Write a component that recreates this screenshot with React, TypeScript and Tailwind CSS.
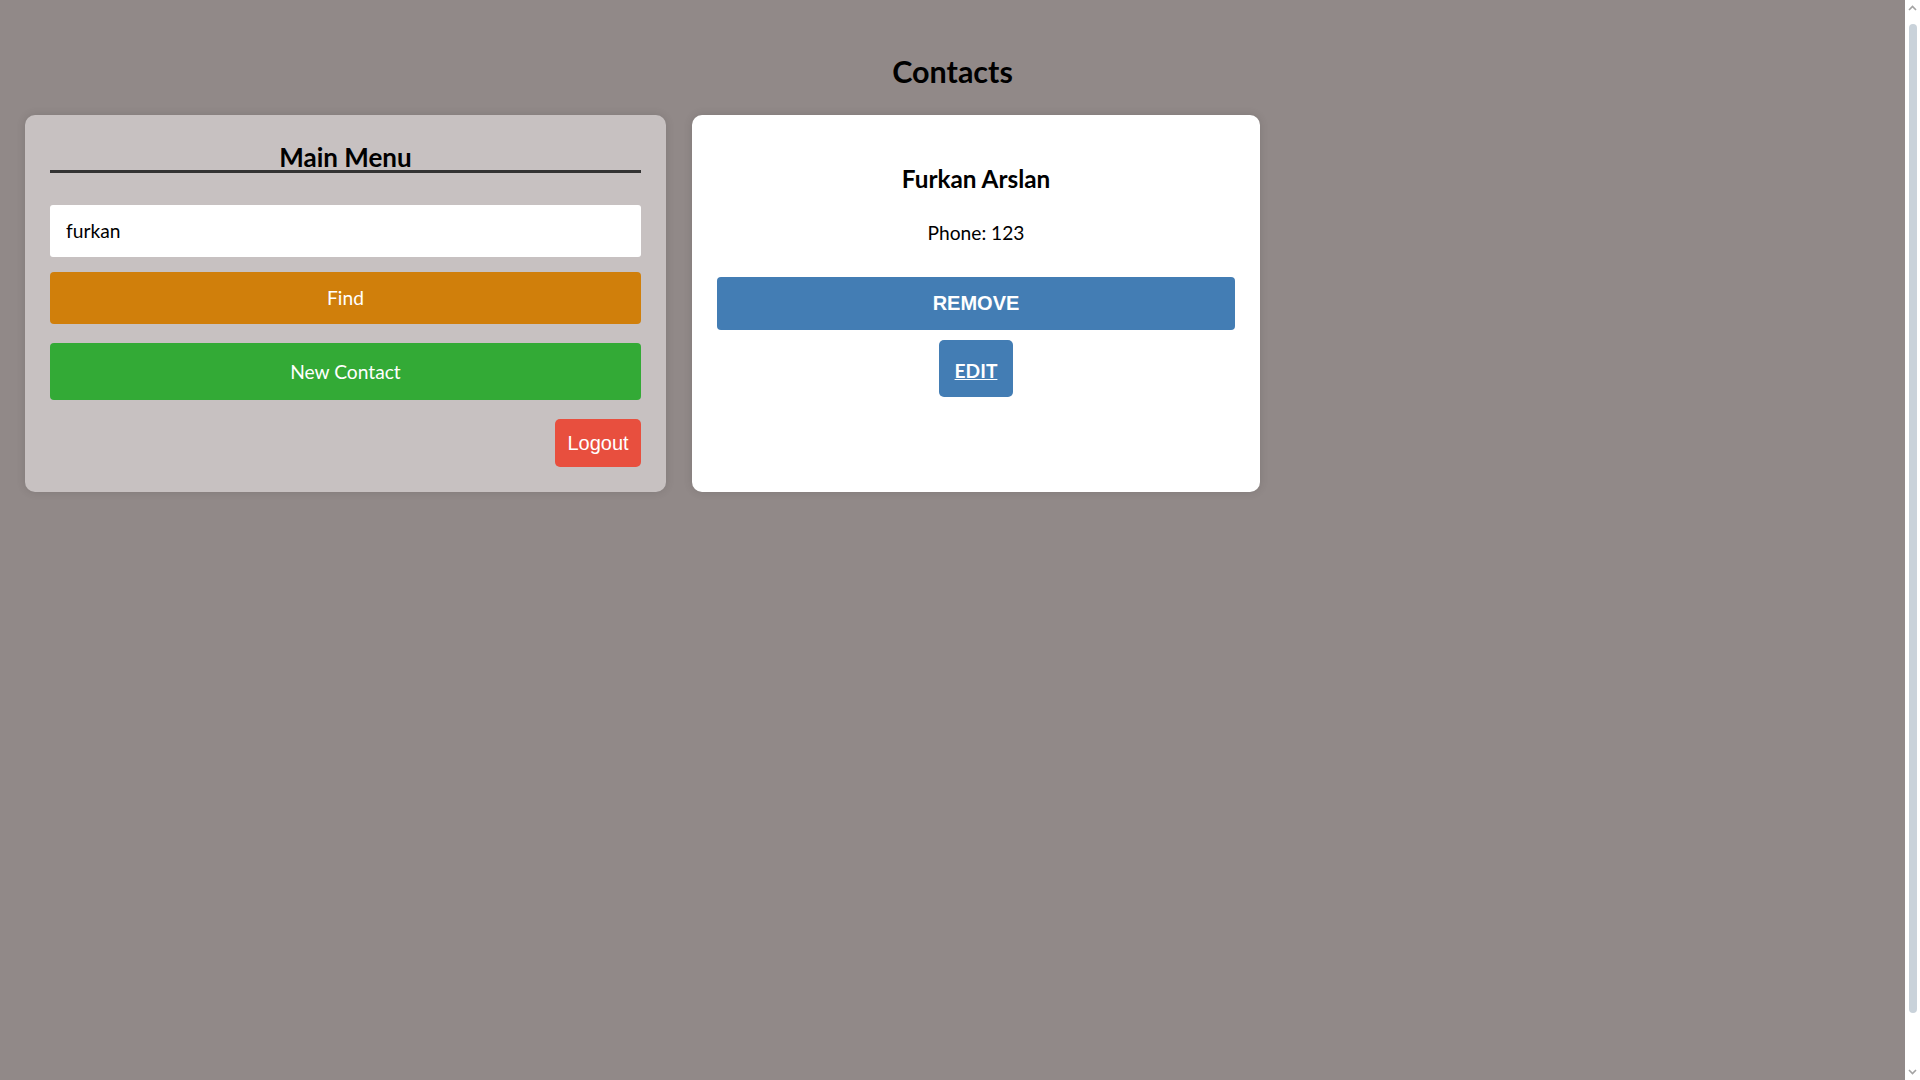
import React from "react";

function FakeScrollbar() {
  return (
    <div className="flex h-full w-[15px] shrink-0 flex-col items-center bg-white">
      <svg width="9" height="6" viewBox="0 0 9 6" className="mt-[5px] shrink-0">
        <path d="M1 5 L4.5 1.5 L8 5" fill="none" stroke="#a3a3a3" strokeWidth="1.6" />
      </svg>
      <div className="mt-[13px] h-[989px] w-[8px] shrink-0 rounded-[4px] bg-[#c9d2da]" />
      <div className="flex-1" />
      <svg width="9" height="6" viewBox="0 0 9 6" className="mb-[5px] shrink-0">
        <path d="M1 1 L4.5 4.5 L8 1" fill="none" stroke="#a3a3a3" strokeWidth="1.6" />
      </svg>
    </div>
  );
}

export default function App() {
  return (
    <div className="flex h-screen overflow-hidden bg-[#918988] font-['Lato',sans-serif] text-black">
      <div className="flex-1">
        <h1 className="pt-[51px] text-center text-[30.5px] font-bold leading-[40px]">Contacts</h1>
        <div className="mt-[24px] flex items-stretch gap-[26px] px-[25px]">
          <div className="w-[641px] rounded-[10px] bg-[#c7c1c1] px-[25px] pb-[25px] pt-[30px] shadow-[0_0_10px_rgba(0,0,0,0.12)]">
            <h2 className="border-b-[3px] border-[#333] text-center text-[26px] font-bold leading-[25px]">Main Menu</h2>
            <input
              className="mt-[32px] block h-[52px] w-full rounded-[3px] bg-white pb-[2px] pl-[16px] text-[19.2px] text-black outline-none"
              defaultValue="furkan"
            />
            <button className="mt-[15px] block h-[52px] w-full rounded-[4px] bg-[#d07f0b] text-[19.2px] text-white">
              Find
            </button>
            <button className="mt-[19px] block h-[57px] w-full rounded-[4px] bg-[#33aa36] pt-[2px] text-[19.2px] text-white">
              New Contact
            </button>
            <div className="mt-[19px] flex justify-end">
              <button className="h-[48px] w-[86px] rounded-[5px] bg-[#e84f3e] font-['Liberation_Sans',Arial,sans-serif] text-[20px] text-white">
                Logout
              </button>
            </div>
          </div>
          <div className="flex w-[568px] flex-col items-center rounded-[10px] bg-white px-[25px] pt-[25px] shadow-[0_0_10px_rgba(0,0,0,0.12)]">
            <h3 className="mt-[23px] text-[24.3px] font-bold leading-[32px]">Furkan Arslan</h3>
            <p className="mt-[24px] text-[19.2px] leading-[28px]">Phone: 123</p>
            <button className="mt-[30px] h-[53px] w-full rounded-[4px] bg-[#437db4] pb-[2px] font-['Liberation_Sans',Arial,sans-serif] text-[20px] font-bold text-white">
              REMOVE
            </button>
            <button className="mt-[10px] h-[57px] w-[74px] rounded-[5px] bg-[#437db4] pt-[5px] text-[19.2px] font-bold text-white underline">
              EDIT
            </button>
          </div>
        </div>
      </div>
      <FakeScrollbar />
    </div>
  );
}
